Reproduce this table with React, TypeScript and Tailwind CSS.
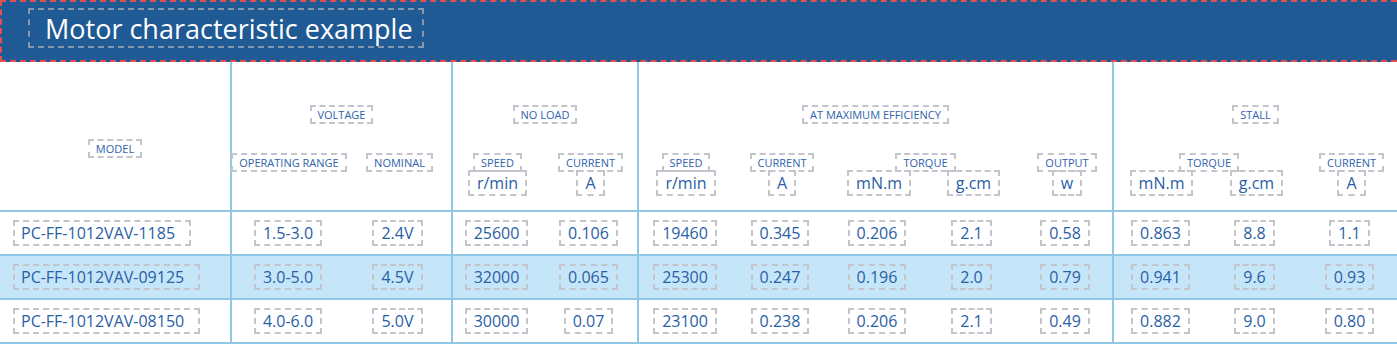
import React from "react"

type Sub = { label: string; unit?: string; width: number; split?: { unit: string; width: number }[] }
type Group = { label: string; width: number; subs: Sub[] }

const W: Record<number, string> = {
  89: "w-[89px]",
  93: "w-[93px]",
  94: "w-[94px]",
  95: "w-[95px]",
  96: "w-[96px]",
  97: "w-[97px]",
  98: "w-[98px]",
  107: "w-[107px]",
  114: "w-[114px]",
  189: "w-[189px]",
  190: "w-[190px]",
  221: "w-[221px]",
  186: "w-[186px]",
  230: "w-[230px]",
  285: "w-[285px]",
  475: "w-[475px]",
}

const groups: Group[] = [
  {
    label: "VOLTAGE",
    width: 221,
    subs: [
      { label: "OPERATING RANGE", width: 114 },
      { label: "NOMINAL", width: 107 },
    ],
  },
  {
    label: "NO LOAD",
    width: 186,
    subs: [
      { label: "SPEED", unit: "r/min", width: 89 },
      { label: "CURRENT", unit: "A", width: 97 },
    ],
  },
  {
    label: "AT MAXIMUM EFFICIENCY",
    width: 475,
    subs: [
      { label: "SPEED", unit: "r/min", width: 94 },
      { label: "CURRENT", unit: "A", width: 98 },
      { label: "TORQUE", width: 189, split: [{ unit: "mN.m", width: 96 }, { unit: "g.cm", width: 93 }] },
      { label: "OUTPUT", unit: "w", width: 94 },
    ],
  },
  {
    label: "STALL",
    width: 285,
    subs: [
      { label: "TORQUE", width: 190, split: [{ unit: "mN.m", width: 95 }, { unit: "g.cm", width: 95 }] },
      { label: "CURRENT", unit: "A", width: 95 },
    ],
  },
]

// leaf column widths, true where a group starts
const cols: [number, boolean][] = [
  [114, true], [107, false],
  [89, true], [97, false],
  [94, true], [98, false], [96, false], [93, false], [94, false],
  [95, true], [95, false], [95, false],
]

const rows = [
  ["PC-FF-1012VAV-1185", "1.5-3.0", "2.4V", "25600", "0.106", "19460", "0.345", "0.206", "2.1", "0.58", "0.863", "8.8", "1.1"],
  ["PC-FF-1012VAV-09125", "3.0-5.0", "4.5V", "32000", "0.065", "25300", "0.247", "0.196", "2.0", "0.79", "0.941", "9.6", "0.93"],
  ["PC-FF-1012VAV-08150", "4.0-6.0", "5.0V", "30000", "0.07", "23100", "0.238", "0.206", "2.1", "0.49", "0.882", "9.0", "0.80"],
]

const Label = ({ children }: { children: React.ReactNode }) => (
  <span className="h-[19px] px-[6px] flex items-center border-2 border-dashed border-[#c4c4cc] text-[11px] leading-none text-[#2f62aa] whitespace-nowrap">
    {children}
  </span>
)

const Unit = ({ children, wide }: { children: React.ReactNode; wide?: boolean }) => (
  <span
    className={`h-[26px] flex items-center border-2 border-dashed border-[#c4c4cc] text-[16px] leading-none text-[#2a5ea6] whitespace-nowrap ${
      wide ? "pl-[6px] pr-[14px]" : "px-[7px]"
    }`}
  >
    {children}
  </span>
)

function HeaderGroup({ g }: { g: Group }) {
  return (
    <div className={`${W[g.width]} shrink-0 border-l-2 border-[#8fc7e8] flex flex-col items-center`}>
      <div className="mt-[43px]">
        <Label>{g.label}</Label>
      </div>
      <div className="mt-[29px] flex w-full">
        {g.subs.map((s, i) => (
          <div key={i} className={`${W[s.width]} shrink-0 flex flex-col items-center`}>
            <Label>{s.label}</Label>
            {s.unit && (
              <div className="-mt-[2px]">
                <Unit>{s.unit}</Unit>
              </div>
            )}
            {s.split && (
              <div className="-mt-[2px] flex w-full">
                {s.split.map((u, j) => (
                  <div key={j} className={`${W[u.width]} shrink-0 flex justify-center`}>
                    <Unit>{u.unit}</Unit>
                  </div>
                ))}
              </div>
            )}
          </div>
        ))}
      </div>
    </div>
  )
}

export default function App() {
  return (
    <div className="w-[1397px] h-[352px] bg-white overflow-hidden" style={{ fontFamily: '"Open Sans", "Noto Sans", sans-serif' }}>
      <div className="h-[62px] bg-[#1f5a95] border-t-2 border-l-2 border-b-2 border-dashed border-[#e0504e] pt-[6px] pl-[26px]">
        <div className="w-[396px] h-[40px] border-2 border-dashed border-[#8797ac] flex items-center pl-[15px]">
          <span className="text-white text-[27px] leading-none">Motor characteristic example</span>
        </div>
      </div>

      <div className="flex h-[150px] border-b-2 border-[#8fc7e8]">
        <div className="w-[230px] shrink-0 flex justify-center pt-[77px]">
          <div>
            <Label>MODEL</Label>
          </div>
        </div>
        {groups.map((g, i) => (
          <HeaderGroup key={i} g={g} />
        ))}
      </div>

      {rows.map((r, ri) => (
        <div key={ri} className={`flex h-[44px] border-b-2 border-[#8fc7e8] ${ri === 1 ? "bg-[#c5e6f8]" : "bg-white"}`}>
          <div className="w-[230px] shrink-0 flex items-center pl-[13px]">
            <Unit wide>{r[0]}</Unit>
          </div>
          {cols.map(([w, start], ci) => (
            <div
              key={ci}
              className={`${W[w]} shrink-0 flex items-center justify-center ${start ? "border-l-2 border-[#8fc7e8]" : ""}`}
            >
              <Unit>{r[ci + 1]}</Unit>
            </div>
          ))}
        </div>
      ))}
    </div>
  )
}
